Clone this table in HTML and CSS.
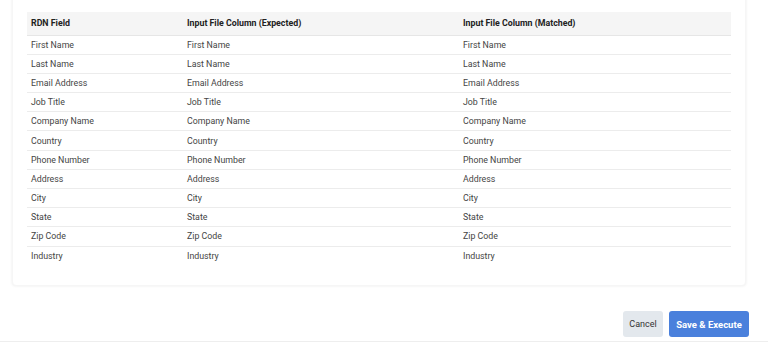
FILE: index.html
```html
<!DOCTYPE html>
<html lang="en">
<head>
    <meta charset="UTF-8">
    <title>Field Mapping</title>
    <link rel="stylesheet" href="styles.css">
</head>
<body>
    <div class="card">
        <table class="mapping">
            <thead>
                <tr>
                    <th class="col-field">RDN Field</th>
                    <th class="col-expected">Input File Column (Expected)</th>
                    <th>Input File Column (Matched)</th>
                </tr>
            </thead>
            <tbody>
                <tr><td>First Name</td><td>First Name</td><td>First Name</td></tr>
                <tr><td>Last Name</td><td>Last Name</td><td>Last Name</td></tr>
                <tr><td>Email Address</td><td>Email Address</td><td>Email Address</td></tr>
                <tr><td>Job Title</td><td>Job Title</td><td>Job Title</td></tr>
                <tr><td>Company Name</td><td>Company Name</td><td>Company Name</td></tr>
                <tr><td>Country</td><td>Country</td><td>Country</td></tr>
                <tr><td>Phone Number</td><td>Phone Number</td><td>Phone Number</td></tr>
                <tr><td>Address</td><td>Address</td><td>Address</td></tr>
                <tr><td>City</td><td>City</td><td>City</td></tr>
                <tr><td>State</td><td>State</td><td>State</td></tr>
                <tr><td>Zip Code</td><td>Zip Code</td><td>Zip Code</td></tr>
                <tr><td>Industry</td><td>Industry</td><td>Industry</td></tr>
            </tbody>
        </table>
    </div>

    <!-- Actions -->
    <div class="actions">
        <button class="btn btn-cancel">Cancel</button>
        <button class="btn btn-primary">Save &amp; Execute</button>
    </div>
</body>
</html>
```

FILE: styles.css
```css
* {
    margin: 0;
    padding: 0;
    box-sizing: border-box;
    font-family: Roboto, 'Liberation Sans', sans-serif;
}

body {
    background: #fff;
    color: #333;
    height: 342px;
    overflow: hidden;
    display: flex;
    flex-direction: column;
}

/* Card */
.card {
    margin: -9px 22px 0 12px;
    padding: 20px 14px 20px 14px;
    background: #fff;
    border-radius: 4px;
    box-shadow: 0 0 3px rgba(0, 0, 0, 0.08);
    border: 1px solid #f6f6f6;
}

.mapping {
    width: 100%;
    border-collapse: collapse;
    font-size: 8.8px;
}

.mapping th {
    background: #f5f5f5;
    color: #222;
    font-weight: 700;
    text-align: left;
    height: 23px;
    padding: 0 4px;
    border-bottom: 1px solid #e6e6e6;
}

.mapping td {
    height: 19.2px;
    padding: 0 4px;
    color: #444;
    border-bottom: 1px solid #ececec;
}

.mapping tbody tr:last-child td {
    border-bottom: none;
}

.col-field {
    width: 156px;
}

.col-expected {
    width: 276px;
}

/* Actions */
.actions {
    margin-top: auto;
    display: flex;
    justify-content: flex-end;
    gap: 6px;
    padding: 0 19px 2px 0;
    border-bottom: 1px solid #eee;
    height: 31px;
}

.btn {
    height: 26px;
    border: none;
    border-radius: 3px;
    font-size: 9px;
    padding: 0 4px;
    cursor: pointer;
}

.btn-cancel {
    background: #e3e8ed;
    color: #333;
    width: 40px;
}

.btn-primary {
    background: #4a80dc;
    color: #fff;
    font-size: 9.5px;
    font-weight: 700;
    width: 80px;
}
```
